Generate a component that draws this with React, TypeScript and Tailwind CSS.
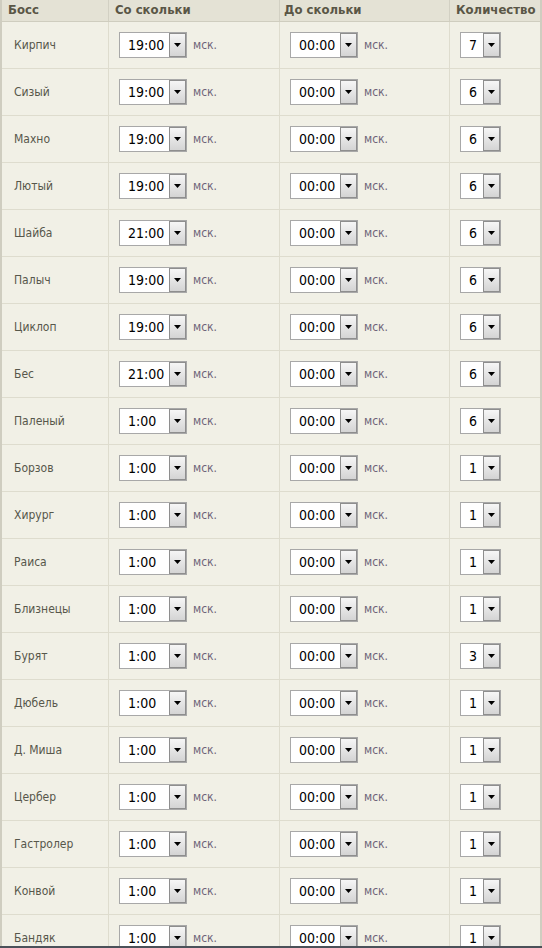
import React from "react";

interface Boss {
  name: string;
  from: string;
  to: string;
  count: string;
}

const bosses: Boss[] = [
  { name: "Кирпич", from: "19:00", to: "00:00", count: "7" },
  { name: "Сизый", from: "19:00", to: "00:00", count: "6" },
  { name: "Махно", from: "19:00", to: "00:00", count: "6" },
  { name: "Лютый", from: "19:00", to: "00:00", count: "6" },
  { name: "Шайба", from: "21:00", to: "00:00", count: "6" },
  { name: "Палыч", from: "19:00", to: "00:00", count: "6" },
  { name: "Циклоп", from: "19:00", to: "00:00", count: "6" },
  { name: "Бес", from: "21:00", to: "00:00", count: "6" },
  { name: "Паленый", from: "1:00", to: "00:00", count: "6" },
  { name: "Борзов", from: "1:00", to: "00:00", count: "1" },
  { name: "Хирург", from: "1:00", to: "00:00", count: "1" },
  { name: "Раиса", from: "1:00", to: "00:00", count: "1" },
  { name: "Близнецы", from: "1:00", to: "00:00", count: "1" },
  { name: "Бурят", from: "1:00", to: "00:00", count: "3" },
  { name: "Дюбель", from: "1:00", to: "00:00", count: "1" },
  { name: "Д. Миша", from: "1:00", to: "00:00", count: "1" },
  { name: "Цербер", from: "1:00", to: "00:00", count: "1" },
  { name: "Гастролер", from: "1:00", to: "00:00", count: "1" },
  { name: "Конвой", from: "1:00", to: "00:00", count: "1" },
  { name: "Бандяк", from: "1:00", to: "00:00", count: "1" },
];

const font = "font-['DejaVu_Sans_Condensed','DejaVu_Sans',sans-serif]";

function Select({ value, wide }: { value: string; wide: boolean }) {
  return (
    <div
      className={`flex h-[26px] border border-[#a8a8a8] bg-white ${
        wide ? "w-[68px]" : "w-[41px]"
      }`}
    >
      <span
        className={`flex-1 pl-[8px] text-[14px] leading-[24px] text-black ${font}`}
      >
        {value}
      </span>
      <span className="flex w-[17px] items-center justify-center border border-[#8e8e8e] bg-gradient-to-b from-[#f6f6f6] to-[#d4d4d4]">
        <svg width="7" height="4" viewBox="0 0 7 4">
          <polygon points="0,0 7,0 3.5,4" fill="#000" />
        </svg>
      </span>
    </div>
  );
}

function TimeCell({ value }: { value: string }) {
  return (
    <div className="flex items-center border-r border-[#dedcce] pl-[10px]">
      <Select value={value} wide />
      <span className={`ml-[6px] text-[12px] text-[#6e6478] ${font}`}>мск.</span>
    </div>
  );
}

export default function App() {
  return (
    <div className="flex h-[948px] w-[542px] flex-col overflow-hidden bg-[#f1f0e6]">
      <div className="flex-1 overflow-hidden border-x-2 border-[#cfcdc0]">
        <div
          className={`grid h-[22px] grid-cols-[107px_171px_170px_90px] border-b border-[#cfcdbf] bg-[#e4e2d5] text-[13px] font-bold leading-[20px] text-[#5a5646] ${font}`}
        >
          <div className="border-r border-[#d2d0c3] pl-[6px]">Босс</div>
          <div className="border-r border-[#d2d0c3] pl-[6px]">Со скольки</div>
          <div className="border-r border-[#d2d0c3] pl-[4px]">До скольки</div>
          <div className="pl-[6px]">Количество</div>
        </div>
        {bosses.map((b) => (
          <div
            key={b.name}
            className="grid h-[47px] shrink-0 grid-cols-[107px_171px_170px_90px] border-b border-[#dedcce]"
          >
            <div
              className={`flex items-center border-r border-[#dedcce] pl-[12px] text-[12px] text-[#57574b] ${font}`}
            >
              {b.name}
            </div>
            <TimeCell value={b.from} />
            <TimeCell value={b.to} />
            <div className="flex items-center pl-[10px]">
              <Select value={b.count} wide={false} />
            </div>
          </div>
        ))}
      </div>
      <div className="h-[2px] shrink-0 bg-[#4b5159]" />
    </div>
  );
}
